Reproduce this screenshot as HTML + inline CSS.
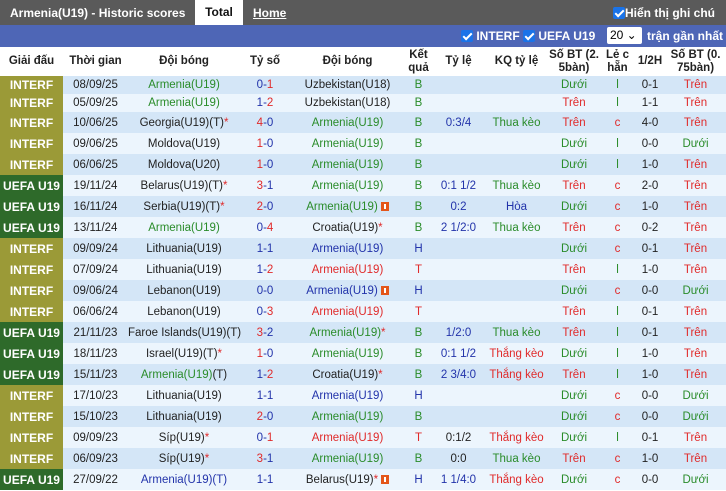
<!DOCTYPE html>
<html><head><meta charset="utf-8"><style>
*{margin:0;padding:0;box-sizing:border-box}
body{width:726px;height:491px;overflow:hidden;background:#fff;font-family:"Liberation Sans",Arial,sans-serif;font-size:11.5px;color:#222}
.top{position:absolute;left:0;top:0;width:726px;height:25px;background:#5a5a5a;color:#fff;font-weight:bold;font-size:12px;white-space:nowrap}
.top span{position:absolute;top:6px}
.tab{position:absolute;left:195px;top:0;width:48px;height:25px;background:#fff;color:#111;text-align:center;line-height:25px}
.blue{position:absolute;left:0;top:25px;width:726px;height:22px;background:#4e66b6;color:#fff;font-weight:bold;font-size:12px;white-space:nowrap}
.cb{display:inline-block;width:12px;height:12px;background:#1a73e8;border-radius:2px;vertical-align:-2px;position:relative}
.cb:after{content:"";position:absolute;left:4px;top:1px;width:3px;height:7px;border:solid #fff;border-width:0 2px 2px 0;transform:rotate(45deg)}
.sel{display:inline-block;background:#fff;color:#000;font-weight:normal;width:35px;height:17px;border-radius:2px;padding-left:3px;line-height:17px;font-size:12px}
table{position:absolute;left:0;top:47px;width:726px;border-collapse:collapse;table-layout:fixed}
th{height:29px;font-weight:bold;font-size:11.5px;color:#222;line-height:13px;text-align:center;background:#fff;white-space:nowrap}
td{text-align:center;white-space:nowrap;overflow:visible;height:21px;padding:0}
tr.s td{height:18px}
tr.a td{background:#d4e6f7}
tr.b td{background:#ecf5fd}
td.i{background:#9b9a37!important;color:#fff;font-weight:bold;font-size:12px}
td.u{background:#2e6a2a!important;color:#fff;font-weight:bold;font-size:12px}
.g{color:#2a8c2a}.r{color:#e02a2a}.bl{color:#2233aa}.k{color:#222}
.st{color:#e02a2a}
.ic{display:inline-block;width:8px;height:9px;background:#e4561a;vertical-align:-1px;margin-left:3px;position:relative}
.ic:after{content:"";position:absolute;left:3px;top:2px;width:2px;height:5px;background:#fff}
</style></head><body>
<div class="top"><span style="left:10px">Armenia(U19) - Historic scores</span><div class="tab">Total</div><span style="left:253px;text-decoration:underline">Home</span><span style="left:613px"><i class="cb"></i>Hiển thị ghi chú</span></div>
<div class="blue"><span style="position:absolute;left:461px;top:4px"><i class="cb"></i> INTERF <i class="cb"></i> UEFA U19</span><span style="position:absolute;left:607px;top:2px"><span class="sel">20 ⌄</span></span><span style="position:absolute;left:647px;top:4px">trận gần nhất</span></div>
<table>
<colgroup><col style="width:63px"><col style="width:65px"><col style="width:112px"><col style="width:50px"><col style="width:115px"><col style="width:27px"><col style="width:53px"><col style="width:63px"><col style="width:52px"><col style="width:35px"><col style="width:30px"><col style="width:61px"></colgroup>
<tr><th>Giải đấu</th><th>Thời gian</th><th>Đội bóng</th><th>Tỷ số</th><th>Đội bóng</th><th>Kết<br>quả</th><th>Tỷ lệ</th><th>KQ tỷ lệ</th><th>Số BT (2.<br>5bàn)</th><th>Lẻ c<br>hẵn</th><th>1/2H</th><th>Số BT (0.<br>75bàn)</th></tr>
<tr class="a s"><td class="i">INTERF</td><td>08/09/25</td><td class="g">Armenia(U19)</td><td><span class="bl">0</span><span class="bl">-</span><span class="r">1</span></td><td class="k">Uzbekistan(U18)</td><td class="g">B</td><td></td><td></td><td class="g">Dưới</td><td class="g">l</td><td>0-1</td><td class="r">Trên</td></tr>
<tr class="b s"><td class="i">INTERF</td><td>05/09/25</td><td class="g">Armenia(U19)</td><td><span class="bl">1-</span><span class="r">2</span></td><td class="k">Uzbekistan(U18)</td><td class="g">B</td><td></td><td></td><td class="r">Trên</td><td class="g">l</td><td>1-1</td><td class="r">Trên</td></tr>
<tr class="a"><td class="i">INTERF</td><td>10/06/25</td><td>Georgia(U19)(T)<span class="st">*</span></td><td><span class="r">4</span><span class="bl">-0</span></td><td class="g">Armenia(U19)</td><td class="g">B</td><td class="bl">0:3/4</td><td class="g">Thua kèo</td><td class="r">Trên</td><td class="r">c</td><td>4-0</td><td class="r">Trên</td></tr>
<tr class="b"><td class="i">INTERF</td><td>09/06/25</td><td>Moldova(U19)</td><td><span class="r">1</span><span class="bl">-0</span></td><td class="g">Armenia(U19)</td><td class="g">B</td><td></td><td></td><td class="g">Dưới</td><td class="g">l</td><td>0-0</td><td class="g">Dưới</td></tr>
<tr class="a"><td class="i">INTERF</td><td>06/06/25</td><td>Moldova(U20)</td><td><span class="r">1</span><span class="bl">-0</span></td><td class="g">Armenia(U19)</td><td class="g">B</td><td></td><td></td><td class="g">Dưới</td><td class="g">l</td><td>1-0</td><td class="r">Trên</td></tr>
<tr class="b"><td class="u">UEFA U19</td><td>19/11/24</td><td>Belarus(U19)(T)<span class="st">*</span></td><td><span class="r">3</span><span class="bl">-1</span></td><td class="g">Armenia(U19)</td><td class="g">B</td><td class="bl">0:1 1/2</td><td class="g">Thua kèo</td><td class="r">Trên</td><td class="r">c</td><td>2-0</td><td class="r">Trên</td></tr>
<tr class="a"><td class="u">UEFA U19</td><td>16/11/24</td><td>Serbia(U19)(T)<span class="st">*</span></td><td><span class="r">2</span><span class="bl">-0</span></td><td class="g">Armenia(U19)<i class="ic"></i></td><td class="g">B</td><td class="bl">0:2</td><td class="bl">Hòa</td><td class="g">Dưới</td><td class="r">c</td><td>1-0</td><td class="r">Trên</td></tr>
<tr class="b"><td class="u">UEFA U19</td><td>13/11/24</td><td class="g">Armenia(U19)</td><td><span class="bl">0-</span><span class="r">4</span></td><td class="k">Croatia(U19)<span class="st">*</span></td><td class="g">B</td><td class="bl">2 1/2:0</td><td class="g">Thua kèo</td><td class="r">Trên</td><td class="r">c</td><td>0-2</td><td class="r">Trên</td></tr>
<tr class="a"><td class="i">INTERF</td><td>09/09/24</td><td>Lithuania(U19)</td><td class="bl">1-1</td><td class="bl">Armenia(U19)</td><td class="bl">H</td><td></td><td></td><td class="g">Dưới</td><td class="r">c</td><td>0-1</td><td class="r">Trên</td></tr>
<tr class="b"><td class="i">INTERF</td><td>07/09/24</td><td>Lithuania(U19)</td><td><span class="bl">1-</span><span class="r">2</span></td><td class="r">Armenia(U19)</td><td class="r">T</td><td></td><td></td><td class="r">Trên</td><td class="g">l</td><td>1-0</td><td class="r">Trên</td></tr>
<tr class="a"><td class="i">INTERF</td><td>09/06/24</td><td>Lebanon(U19)</td><td class="bl">0-0</td><td class="bl">Armenia(U19)<i class="ic"></i></td><td class="bl">H</td><td></td><td></td><td class="g">Dưới</td><td class="r">c</td><td>0-0</td><td class="g">Dưới</td></tr>
<tr class="b"><td class="i">INTERF</td><td>06/06/24</td><td>Lebanon(U19)</td><td><span class="bl">0-</span><span class="r">3</span></td><td class="r">Armenia(U19)</td><td class="r">T</td><td></td><td></td><td class="r">Trên</td><td class="g">l</td><td>0-1</td><td class="r">Trên</td></tr>
<tr class="a"><td class="u">UEFA U19</td><td>21/11/23</td><td>Faroe Islands(U19)(T)</td><td><span class="r">3</span><span class="bl">-2</span></td><td class="g">Armenia(U19)<span class="st">*</span></td><td class="g">B</td><td class="bl">1/2:0</td><td class="g">Thua kèo</td><td class="r">Trên</td><td class="g">l</td><td>0-1</td><td class="r">Trên</td></tr>
<tr class="b"><td class="u">UEFA U19</td><td>18/11/23</td><td>Israel(U19)(T)<span class="st">*</span></td><td><span class="r">1</span><span class="bl">-0</span></td><td class="g">Armenia(U19)</td><td class="g">B</td><td class="bl">0:1 1/2</td><td class="r">Thắng kèo</td><td class="g">Dưới</td><td class="g">l</td><td>1-0</td><td class="r">Trên</td></tr>
<tr class="a"><td class="u">UEFA U19</td><td>15/11/23</td><td class="g">Armenia(U19)<span class="k">(T)</span></td><td><span class="bl">1-</span><span class="r">2</span></td><td class="k">Croatia(U19)<span class="st">*</span></td><td class="g">B</td><td class="bl">2 3/4:0</td><td class="r">Thắng kèo</td><td class="r">Trên</td><td class="g">l</td><td>1-0</td><td class="r">Trên</td></tr>
<tr class="b"><td class="i">INTERF</td><td>17/10/23</td><td>Lithuania(U19)</td><td class="bl">1-1</td><td class="bl">Armenia(U19)</td><td class="bl">H</td><td></td><td></td><td class="g">Dưới</td><td class="r">c</td><td>0-0</td><td class="g">Dưới</td></tr>
<tr class="a"><td class="i">INTERF</td><td>15/10/23</td><td>Lithuania(U19)</td><td><span class="r">2</span><span class="bl">-0</span></td><td class="g">Armenia(U19)</td><td class="g">B</td><td></td><td></td><td class="g">Dưới</td><td class="r">c</td><td>0-0</td><td class="g">Dưới</td></tr>
<tr class="b"><td class="i">INTERF</td><td>09/09/23</td><td>Síp(U19)<span class="st">*</span></td><td><span class="bl">0-</span><span class="r">1</span></td><td class="r">Armenia(U19)</td><td class="r">T</td><td class="k">0:1/2</td><td class="r">Thắng kèo</td><td class="g">Dưới</td><td class="g">l</td><td>0-1</td><td class="r">Trên</td></tr>
<tr class="a"><td class="i">INTERF</td><td>06/09/23</td><td>Síp(U19)<span class="st">*</span></td><td><span class="r">3</span><span class="bl">-1</span></td><td class="g">Armenia(U19)</td><td class="g">B</td><td class="k">0:0</td><td class="g">Thua kèo</td><td class="r">Trên</td><td class="r">c</td><td>1-0</td><td class="r">Trên</td></tr>
<tr class="b"><td class="u">UEFA U19</td><td>27/09/22</td><td class="bl">Armenia(U19)(T)</td><td class="bl">1-1</td><td class="k">Belarus(U19)<span class="st">*</span><i class="ic"></i></td><td class="bl">H</td><td class="bl">1 1/4:0</td><td class="r">Thắng kèo</td><td class="g">Dưới</td><td class="r">c</td><td>0-0</td><td class="g">Dưới</td></tr>
</table>
</body></html>
